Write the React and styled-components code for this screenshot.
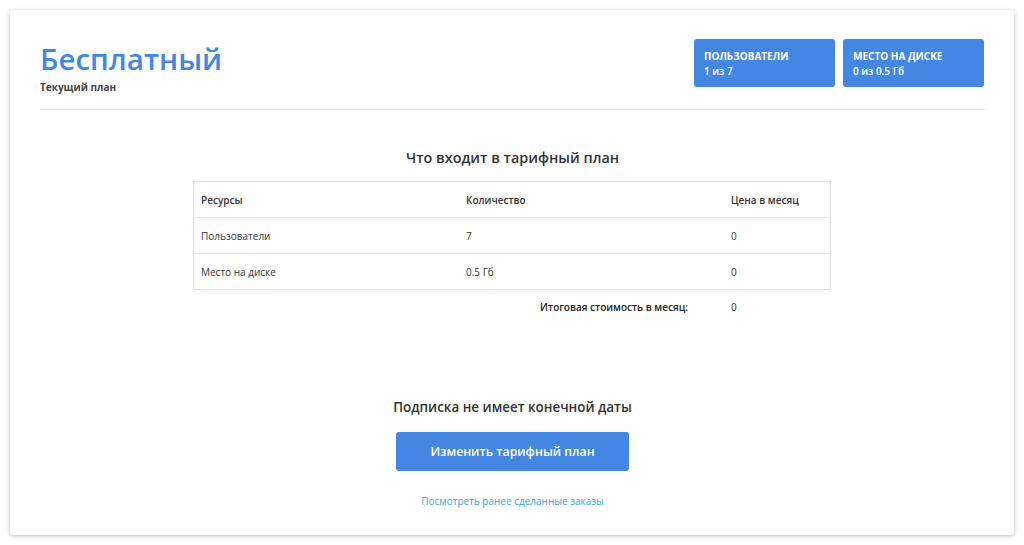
import React from "react";
import styled, { createGlobalStyle } from "styled-components";

const Global = createGlobalStyle`
  html, body { margin: 0; padding: 0; background: #ffffff; }
  body { font-family: "Open Sans", "Liberation Sans", sans-serif; color: #333; }
  * { box-sizing: border-box; }
`;

const Page = styled.div`
  padding: 10px;
  height: 545px;
`;

const Card = styled.div`
  height: 525px;
  background: #fff;
  border-radius: 4px;
  box-shadow: 0 1px 4px rgba(0, 0, 0, 0.28);
  padding: 29px 29px 0 30px;
  display: flex;
  flex-direction: column;
`;

const Header = styled.div`
  display: flex;
  justify-content: space-between;
  align-items: flex-start;
  padding-bottom: 15px;
  border-bottom: 1px solid #e6e6e6;
`;

const TitleBlock = styled.div`
  display: flex;
  flex-direction: column;
  padding-top: 2px;
`;

const PlanName = styled.h1`
  margin: 0;
  font-size: 29.5px;
  line-height: 36px;
  font-weight: 600;
  color: #4387e2;
`;

const PlanLabel = styled.div`
  font-size: 10px;
  font-weight: 700;
  color: #444;
  margin-top: 3px;
`;

const Badges = styled.div`
  display: flex;
  gap: 8px;
  margin-right: 1px;
`;

const Badge = styled.div`
  width: 141px;
  height: 48px;
  background: #4387e2;
  border-radius: 3px;
  color: #fff;
  padding: 10px 10px 0 10px;
  display: flex;
  flex-direction: column;
`;

const BadgeTitle = styled.div`
  font-size: 10px;
  font-weight: 700;
  line-height: 15px;
  text-transform: uppercase;
`;

const BadgeValue = styled.div`
  font-size: 10px;
  font-weight: 600;
  line-height: 15px;
`;

const Section = styled.div`
  display: flex;
  flex-direction: column;
  align-items: center;
`;

const SectionTitle = styled.h2`
  margin: 38px 0 13px;
  font-size: 14.4px;
  line-height: 20px;
  font-weight: 600;
  color: #333;
`;

const Table = styled.div`
  width: 638px;
  margin-right: 1px;
  border: 1px solid #e3e3e3;
  display: flex;
  flex-direction: column;
`;

const Row = styled.div`
  display: grid;
  grid-template-columns: 265px 265px 1fr;
  height: ${(p) => (p.$last ? "35px" : "36px")};
  align-items: center;
  border-bottom: ${(p) => (p.$last ? "none" : "1px solid #e8e8e8")};
`;

const Cell = styled.div`
  padding-left: 7px;
  font-size: 10px;
  font-weight: ${(p) => (p.$head ? 600 : 400)};
  color: #333;
`;

const TotalRow = styled.div`
  width: 638px;
  margin-right: 1px;
  display: grid;
  grid-template-columns: 495px 1fr;
  margin-top: 10px;
  font-size: 10px;
  font-weight: 600;
  color: #222;
`;

const TotalLabel = styled.div`
  text-align: right;
`;

const TotalValue = styled.div`
  padding-left: 43px;
  font-weight: 400;
`;

const Footer = styled.div`
  display: flex;
  flex-direction: column;
  align-items: center;
  margin-top: 83px;
`;

const Note = styled.div`
  font-size: 13.4px;
  font-weight: 600;
  color: #333;
  line-height: 20px;
`;

const Button = styled.button`
  margin-top: 15px;
  width: 233px;
  height: 39px;
  border: none;
  border-radius: 3px;
  background: #4387e2;
  color: #fff;
  font-family: inherit;
  font-size: 12.25px;
  font-weight: 600;
  cursor: pointer;
`;

const Link = styled.a`
  margin-top: 23px;
  font-size: 10px;
  color: #40a2e0;
  text-decoration: none;
`;

const rows = [
  ["Пользователи", "7", "0"],
  ["Место на диске", "0.5 Гб", "0"],
];

export default function App() {
  return (
    <Page>
      <Global />
      <Card>
        <Header>
          <TitleBlock>
            <PlanName>Бесплатный</PlanName>
            <PlanLabel>Текущий план</PlanLabel>
          </TitleBlock>
          <Badges>
            <Badge>
              <BadgeTitle>Пользователи</BadgeTitle>
              <BadgeValue>1 из 7</BadgeValue>
            </Badge>
            <Badge>
              <BadgeTitle>Место на диске</BadgeTitle>
              <BadgeValue>0 из 0.5 Гб</BadgeValue>
            </Badge>
          </Badges>
        </Header>
        <Section>
          <SectionTitle>Что входит в тарифный план</SectionTitle>
          <Table>
            <Row>
              <Cell $head>Ресурсы</Cell>
              <Cell $head>Количество</Cell>
              <Cell $head>Цена в месяц</Cell>
            </Row>
            {rows.map((r, i) => (
              <Row key={i} $last={i === rows.length - 1}>
                <Cell>{r[0]}</Cell>
                <Cell>{r[1]}</Cell>
                <Cell>{r[2]}</Cell>
              </Row>
            ))}
          </Table>
          <TotalRow>
            <TotalLabel>Итоговая стоимость в месяц:</TotalLabel>
            <TotalValue>0</TotalValue>
          </TotalRow>
        </Section>
        <Footer>
          <Note>Подписка не имеет конечной даты</Note>
          <Button>Изменить тарифный план</Button>
          <Link href="#">Посмотреть ранее сделанные заказы</Link>
        </Footer>
      </Card>
    </Page>
  );
}
